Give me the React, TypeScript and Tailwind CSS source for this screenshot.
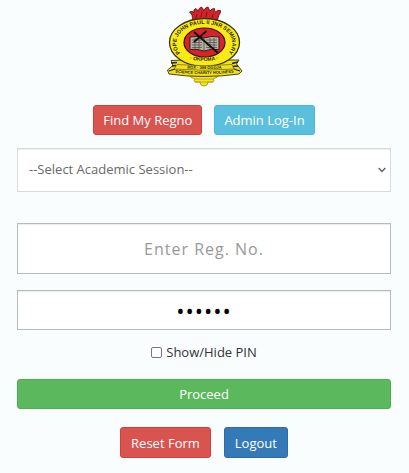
import { useState } from "react";

function SeminaryCrest() {
  return (
    <svg
      viewBox="0 0 89 95"
      width="89"
      height="95"
      role="img"
      aria-label="Pope John Paul II Junior Seminary Okpoma crest"
      fontFamily='"Liberation Sans", Arial, sans-serif'
      fontWeight="bold"
    >
      <defs>
        <path id="ringTop" d="M22.5 55 A28 19 0 1 1 66 55" />
        <path id="ringBottom" d="M28 59 Q44 63 60 59" />
        <path id="ribbonUpper" d="M18 68 Q44 70 71 68" />
        <path id="ribbonLower" d="M10 72 Q44 76 79 72" />
      </defs>
      <path
        d="M33 21 L32 15 L29.500 12 Q32 10.500 34 12.500 Q33 9 36 8.500 Q37.500 9.500 38 11.500 Q39 7.500 41.500 7 Q43.500 8.500 43.500 11 Q45.500 7 48 7 Q49.500 9 49.500 11.500 Q52 8 54.500 8.500 Q54.500 11 55.500 12 Q57.500 9.500 60.500 10.500 Q61 13 59 15 L57 21 Z"
        fill="#d5212b"
        stroke="#571013"
        strokeWidth="0.8"
      />
      <path d="M36 18 L37 14 M41 17 L42 12 M46 17 L47 12 M52 18 L53 14" stroke="#6d1217" strokeWidth="0.9" fill="none" />
      <path
        d="M28 74 Q30 78 35 79 Q33 81 35 82 H40 Q40 86 44 86 Q48 86 48 82 H53 Q55 81 53 79 Q58 78 60 74 Z"
        fill="#f4e51c"
        stroke="#9c8f13"
        strokeWidth="0.8"
      />
      <path
        d="M11 60.500 L24 60 L66 60 L79 60 L76.500 64 L82 71 L79 74 Q44 79 9 74 L7.500 70 L13 65.500 Z"
        fill="#efdf1d"
        stroke="#3b360d"
        strokeWidth="0.9"
      />
      <ellipse cx="44.500" cy="42.500" rx="35" ry="24" fill="#f8ea16" stroke="#38330c" strokeWidth="1.3" />
      <path d="M17 64.500 Q44 67 72 64.500 L74 69 Q44 71.500 14 69 Z" fill="#efdf1d" stroke="#57500f" strokeWidth="0.6" />
      <ellipse cx="44.500" cy="42.500" rx="20.500" ry="14.500" fill="#d8232a" stroke="#3d1110" strokeWidth="1.2" />
      <path
        d="M30 37 Q37 35.500 44 38 Q51 35.500 59 37 V49.500 Q51 48.500 44 51 Q37 48.500 30 49.500 Z"
        fill="#b5b1a4"
        stroke="#292321"
        strokeWidth="1"
      />
      <path
        d="M32 40 H42 M32 42.500 H42 M32 45 H42 M32 47.500 H42 M46 40 H57 M46 42.500 H57 M46 45 H57 M46 47.500 H57 M35 38 V49 M39 38 V49 M50 38 V49 M54 38 V49 M44 38 V51"
        stroke="#4a4642"
        strokeWidth="0.7"
        fill="none"
      />
      <path d="M34 32 L58 53 M34 42 L46.500 31" stroke="#17100f" strokeWidth="2" fill="none" />
      <path
        d="M11 63 L17 62.500 M9 71 L15 69 M12 66 L16 65.500 M78 62 L72 63.500 M78 66 L73 66.500 M80 71 L74 69"
        stroke="#27240d"
        strokeWidth="1.3"
        fill="none"
      />
      <g fill="#29250a">
        <text fontSize="5.500">
          <textPath href="#ringTop" startOffset="50%" textAnchor="middle">
            POPE JOHN PAUL II JNR SEMINARY
          </textPath>
        </text>
        <text fontSize="5">
          <textPath href="#ringBottom" startOffset="50%" textAnchor="middle">
            · OKPOMA ·
          </textPath>
        </text>
        <text fontSize="4">
          <textPath href="#ribbonUpper" startOffset="50%" textAnchor="middle">
            BOX · 399 OGOJA
          </textPath>
        </text>
        <text fontSize="4">
          <textPath href="#ribbonLower" startOffset="50%" textAnchor="middle">
            SCIENCE CHARITY HOLINESS
          </textPath>
        </text>
      </g>
      <path d="M35 79 H53 M35 82 H53" stroke="#afa015" strokeWidth="0.8" />
    </svg>
  );
}

const button = "rounded-[3px] border text-[13px] leading-5 text-white";
const field = "block w-full border bg-white shadow-[inset_0_1px_1px_rgba(0,0,0,0.075)] outline-none";

export default function App() {
  const [pin, setPin] = useState("123456");
  const [regNo, setRegNo] = useState("");
  const [showPin, setShowPin] = useState(false);

  return (
    <main className="min-h-screen bg-[#f9fdfe] pr-[18px] pb-[15px] pl-[17px] font-['Open_Sans',sans-serif] text-[13px] text-[#333333]">
      <form className="flex flex-col" onSubmit={(event) => event.preventDefault()}>
        <header className="flex flex-col items-center gap-[10px]">
          <SeminaryCrest />
          <div className="flex justify-center gap-3">
            <button type="button" className={`${button} h-[30px] border-[#d43f3a] bg-[#d9534f] px-[9px]`}>
              Find My Regno
            </button>
            <button type="button" className={`${button} h-[30px] border-[#46b8da] bg-[#5bc0de] px-[9px]`}>
              Admin Log-In
            </button>
          </div>
        </header>

        <div className="relative mt-[13px]">
          <select
            aria-label="Academic session"
            className={`${field} h-11 appearance-none border-[#d9dbdb] px-[11px] text-[13px] text-[#696969]`}
          >
            <option>--Select Academic Session--</option>
          </select>
          <svg
            viewBox="0 0 8 6"
            className="pointer-events-none absolute top-[19px] right-[5px] h-[6px] w-2"
            fill="none"
            stroke="#606060"
            strokeWidth="1.4"
          >
            <path d="M0.700 1 L4 4.400 L7.300 1" />
          </svg>
        </div>

        <input
          type="text"
          aria-label="Registration number"
          placeholder="Enter Reg. No."
          value={regNo}
          onChange={(event) => setRegNo(event.target.value)}
          className={`${field} mt-[31px] h-[51px] border-[#b5bbbd] px-3 text-center text-base tracking-[1px] placeholder:text-[#999999]`}
        />

        <input
          type={showPin ? "text" : "password"}
          aria-label="PIN"
          value={pin}
          onChange={(event) => setPin(event.target.value)}
          className={`${field} mt-4 h-10 border-[#b5bbbd] px-3 text-center text-[22px] tracking-[1px] text-black`}
        />

        <label className="mt-3 flex h-5 items-center justify-center gap-1 leading-5">
          <input
            type="checkbox"
            checked={showPin}
            onChange={(event) => setShowPin(event.target.checked)}
            className="size-[11px] appearance-none rounded-[2px] border border-[#767680] bg-white checked:bg-[#337ab7]"
          />
          Show/Hide PIN
        </label>

        <button type="submit" className={`${button} mt-[17px] h-[30px] w-full border-[#4cae4c] bg-[#5cb85c] px-[10px]`}>
          Proceed
        </button>

        <div className="mt-[18px] flex justify-center gap-[13px]">
          <button type="reset" className={`${button} h-[31px] border-[#d43f3a] bg-[#d9534f] px-[10px]`}>
            Reset Form
          </button>
          <button type="button" className={`${button} h-[31px] border-[#2e6da4] bg-[#337ab7] px-[10px]`}>
            Logout
          </button>
        </div>
      </form>
    </main>
  );
}
